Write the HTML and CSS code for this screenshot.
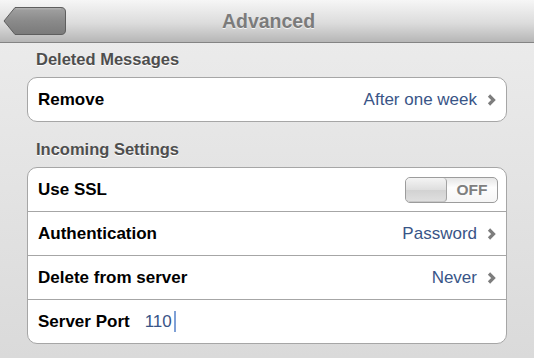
FILE: index.html
```html
<!DOCTYPE html>
<html lang="en">
	<head>
		<meta charset="UTF-8"/>
		<meta name="viewport" content="width=device-width, initial-scale=1.0"/>
		<title>Advanced</title>
		<link rel="stylesheet" href="styles.css">
	</head>
	<body>
	  <header class="navbar">
		<a href="#" class="back-btn" aria-label="Back">
		  <svg width="64" height="30" viewBox="0 0 64 30">
			<defs>
			  <linearGradient id="backFill" x1="0" y1="0" x2="0" y2="1">
				<stop offset="0" stop-color="#a2a2a2"/>
				<stop offset="0.5" stop-color="#8a8a8a"/>
				<stop offset="1" stop-color="#7a7a7a"/>
			  </linearGradient>
			</defs>
			<path d="M1 15 L12 1.5 H58 Q62.5 1.5 62.5 6 V24 Q62.5 28.5 58 28.5 H12 Z" fill="url(#backFill)" stroke="#5e5e5e" stroke-width="1"/>
			<path d="M13 2.8 H58" stroke="#b4b4b4" stroke-width="1" fill="none"/>
		  </svg>
		</a>
		<h1 class="nav-title">Advanced</h1>
		<span></span>
	  </header>

	  <main class="content">
		<section class="group">
		  <h2 class="group-title">Deleted Messages</h2>
		  <div class="card">
			<div class="row">
			  <span class="row-label">Remove</span>
			  <span class="row-value">After one week</span>
			  <svg class="chevron" width="9" height="12" viewBox="0 0 9 12"><path d="M2 1.5 L6.5 6 L2 10.5" /></svg>
			</div>
		  </div>
		</section>

		<section class="group">
		  <h2 class="group-title">Incoming Settings</h2>
		  <div class="card">
			<div class="row">
			  <span class="row-label">Use SSL</span>
			  <div class="switch">
				<span class="switch-thumb"></span>
				<span class="switch-text">OFF</span>
			  </div>
			</div>
			<div class="row">
			  <span class="row-label">Authentication</span>
			  <span class="row-value">Password</span>
			  <svg class="chevron" width="9" height="12" viewBox="0 0 9 12"><path d="M2 1.5 L6.5 6 L2 10.5" /></svg>
			</div>
			<div class="row">
			  <span class="row-label">Delete from server</span>
			  <span class="row-value">Never</span>
			  <svg class="chevron" width="9" height="12" viewBox="0 0 9 12"><path d="M2 1.5 L6.5 6 L2 10.5" /></svg>
			</div>
			<div class="row">
			  <span class="row-label">Server Port</span>
			  <span class="port-value">110</span><span class="caret"></span>
			</div>
		  </div>
		</section>
	  </main>
	</body>
</html>
```

FILE: styles.css
```css
* {
  box-sizing: border-box;
}
body {
  margin: 0;
  height: 100vh;
  font-family: "Liberation Sans", Arial, sans-serif;
  background: linear-gradient(#ededed, #dadada);
}
.navbar {
  display: grid;
  grid-template-columns: 1fr auto 1fr;
  align-items: center;
  height: 43px;
  padding: 0 0 1px 3px;
  background: linear-gradient(#f6f6f6, #dcdcdc 55%, #b6b6b6);
  border-bottom: 1px solid #848484;
}
.back-btn {
  display: block;
  width: 64px;
  height: 30px;
  margin-top: 1px;
}
.back-btn svg {
  display: block;
}
.nav-title {
  margin: 2px 0 0;
  font-size: 19.5px;
  font-weight: 700;
  color: #7b7b7b;
  text-shadow: 0 1px 0 #f4f4f4;
}
.content {
  padding: 6px 27px 0;
}
.group + .group {
  margin-top: 17px;
}
.group-title {
  margin: 0 0 8px;
  padding-left: 9px;
  height: 20px;
  line-height: 20px;
  font-size: 16.5px;
  font-weight: 700;
  color: #4e4e4e;
  text-shadow: 0 1px 0 #fff;
}
.card {
  background: #fff;
  border: 1px solid #a6a6a6;
  border-radius: 10px;
}
.row {
  display: flex;
  align-items: center;
  height: 43px;
  padding: 0 10px;
}
.row + .row {
  height: 44px;
  border-top: 1px solid #a6a6a6;
}
.row-label {
  font-size: 17px;
  font-weight: 700;
  color: #000;
}
.row-value {
  margin-left: auto;
  font-size: 17px;
  color: #395587;
}
.chevron {
  margin-left: 10px;
}
.chevron path {
  fill: none;
  stroke: #7d7d7d;
  stroke-width: 3.2;
}
.port-value {
  margin-left: 15px;
  font-size: 17px;
  color: #395587;
}
.caret {
  display: inline-block;
  width: 2px;
  height: 21px;
  margin-left: 2px;
  background: #7fa0d6;
}
.switch {
  display: flex;
  margin-left: auto;
  margin-right: -2px;
  width: 93px;
  height: 26px;
  border: 1px solid #9c9c9c;
  border-radius: 5px;
  background: linear-gradient(#e6e6e6, #fdfdfd 40%, #f6f6f6);
  overflow: hidden;
}
.switch-thumb {
  width: 41px;
  border-right: 1px solid #a2a2a2;
  border-radius: 4px;
  background: linear-gradient(#f4f4f4, #dedede 50%, #d2d2d2 51%, #e0e0e0);
  box-shadow: inset 0 -1px 0 #c8c8c8;
}
.switch-text {
  flex: 1;
  text-align: center;
  line-height: 24px;
  font-size: 15.5px;
  font-weight: 700;
  color: #7f7f7f;
}
```
